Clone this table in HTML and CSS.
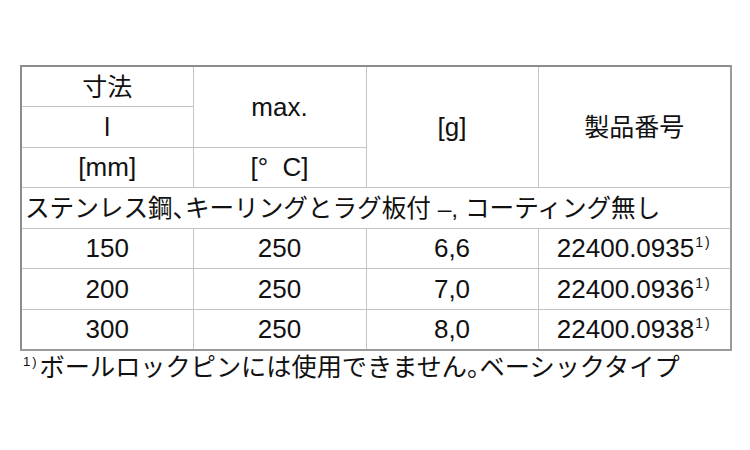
FILE: index.html
```html
<!DOCTYPE html>
<html lang="ja">
<head>
<meta charset="utf-8">
<link rel="stylesheet" href="styles.css">
</head>
<body>
<div class="page">
  <table class="spec">
    <colgroup>
      <col class="c1"><col class="c2"><col class="c3"><col class="c4">
    </colgroup>
    <tr>
      <td class="jp">寸法</td>
      <td rowspan="2">max.</td>
      <td rowspan="3">[g]</td>
      <td rowspan="3" class="jp">製品番号</td>
    </tr>
    <tr>
      <td>l</td>
    </tr>
    <tr>
      <td>[mm]</td>
      <td>[°&nbsp;&nbsp;C]</td>
    </tr>
    <tr>
      <td colspan="4" class="group">ステンレス鋼<span class="half">、</span>キーリングとラグ板付 –, コーティング無し</td>
    </tr>
    <tr>
      <td>150</td><td>250</td><td>6,6</td><td>22400.0935<span class="sup">1)</span></td>
    </tr>
    <tr>
      <td>200</td><td>250</td><td>7,0</td><td>22400.0936<span class="sup">1)</span></td>
    </tr>
    <tr>
      <td>300</td><td>250</td><td>8,0</td><td>22400.0938<span class="sup">1)</span></td>
    </tr>
  </table>
  <p class="note"><span class="note-sup">1)</span>ボールロックピンには使用できません<span class="half">。</span>ベーシックタイプ</p>
</div>
</body>
</html>
```
FILE: styles.css
```css
html, body {
  margin: 0;
  padding: 0;
  background: #ffffff;
}
.page {
  padding: 65px 0 0 20px;
  font-family: "Liberation Sans", "Noto Sans CJK JP", sans-serif;
  color: #111111;
}
.spec {
  border-collapse: collapse;
  width: 710px;
  table-layout: fixed;
  border-top: 2px solid #8c8c8c;
  border-left: 2px solid #8c8c8c;
  border-right: 2px solid #9a9a9a;
  border-bottom: 2px solid #9a9a9a;
}
.c1 { width: 172px; }
.c2 { width: 173px; }
.c3 { width: 172px; }
.c4 { width: 193px; }
.spec tr {
  height: 40.5px;
}
.spec td {
  border: 1px solid #c4c4c4;
  text-align: center;
  vertical-align: middle;
  padding: 0;
  font-size: 26px;
  line-height: 30px;
}
.spec td.jp {
  font-size: 25px;
}
.spec td.group {
  text-align: left;
  padding-left: 3px;
  padding-top: 3px;
  font-size: 24.6px;
  white-space: nowrap;
}
.half {
  font-feature-settings: "halt";
}
.sup {
  font-size: 14px;
  line-height: 1;
  vertical-align: 10px;
  letter-spacing: 2px;
  margin-left: 1px;
}
.note {
  margin: 0;
  padding-left: 3px;
  font-size: 25.2px;
  line-height: 32px;
  white-space: nowrap;
}
.note-sup {
  font-size: 13px;
  line-height: 1;
  vertical-align: 10px;
  letter-spacing: 2px;
  margin-right: 1px;
}
```
